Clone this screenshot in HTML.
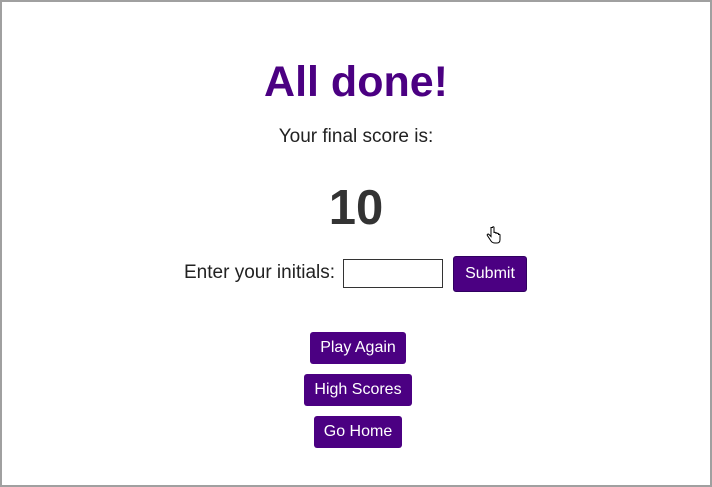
<!DOCTYPE html><html><head><style>
body{margin:0;width:712px;height:487px;overflow:hidden;font-family:"Liberation Sans",Arial,sans-serif;background:#fff}
.frame{position:absolute;left:0;top:0;width:708px;height:483px;border:2px solid #a0a0a0}
.a{position:absolute;white-space:nowrap}
.c{left:0;width:712px;text-align:center}
.b{position:absolute;background:#4b0082;color:#fff;font-size:16px;border-radius:3px;display:flex;align-items:center;justify-content:center}
</style></head><body><div class="frame"></div>
<div class="a c" style="top:57px;font-size:43px;font-weight:bold;color:#4b0082;line-height:50px">All done!</div>
<div class="a c" style="top:126px;font-size:19px;color:#222;line-height:22px">Your final score is:</div>
<div class="a c" style="top:180px;font-size:49px;font-weight:bold;color:#333;line-height:56px">10</div>
<div class="a" style="left:184px;top:262px;font-size:19px;color:#222;line-height:22px">Enter your initials:</div>
<div class="a" style="left:343px;top:259px;width:98px;height:27px;border:1px solid #333"></div>
<div class="b" style="left:453px;top:256px;width:74px;height:36px;border:1px solid #300060;box-sizing:border-box">Submit</div>
<div class="b" style="left:310px;top:332px;width:96px;height:32px">Play Again</div>
<div class="b" style="left:304px;top:374px;width:108px;height:32px">High Scores</div>
<div class="b" style="left:314px;top:416px;width:88px;height:32px">Go Home</div>
<svg class="a" style="left:486px;top:226px" width="16" height="18" viewBox="0 0 16 18"><path d="M5 1.5v9l-2-2c-1-1-2.5 0-1.5 1.2L5 15c1 1.5 2 2 4 2h2c2 0 3-1.5 3-3.5V9c0-1-1.5-1-1.5 0V8c0-1-1.5-1-1.5 0V7.5c0-1-1.5-1-1.5 0V7c0-1-1.5-1-1.5 0V1.5c0-1-1.5-1-1.5 0z" fill="#fff" stroke="#000" stroke-width="1"/></svg>
</body></html>
